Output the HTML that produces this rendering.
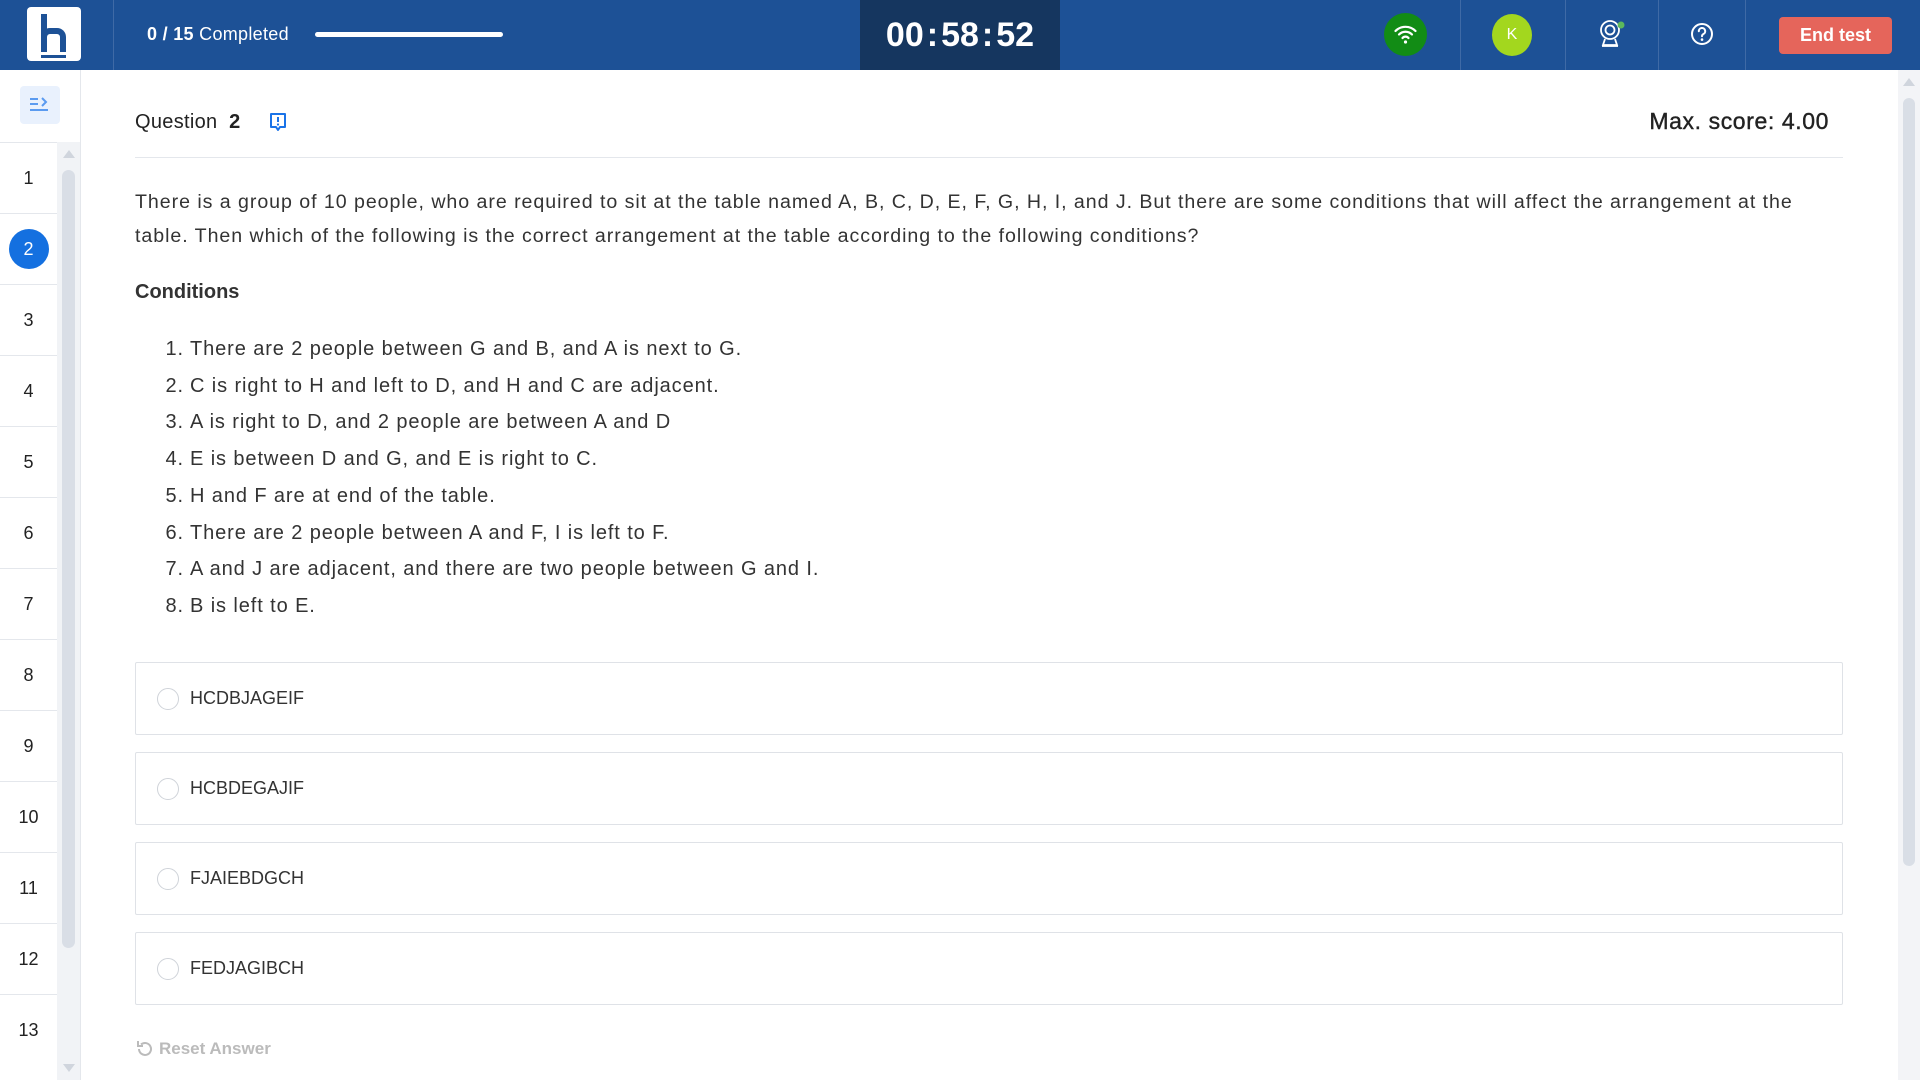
<!DOCTYPE html>
<html><head><style>
*{box-sizing:border-box;margin:0;padding:0}
body{width:1920px;height:1080px;overflow:hidden;background:#fff;font-family:"Liberation Sans",sans-serif;color:#333;position:relative}
.hdr{position:absolute;left:0;top:0;width:1920px;height:70px;background:#1d5196}
.abs{position:absolute}
.sep{position:absolute;top:0;width:1px;height:70px;background:#3f6aa6}
.row{position:absolute;left:0;width:57px;height:71px;border-top:1px solid #e4e7ec;display:flex;align-items:center;justify-content:center;font-size:18px;color:#222}
.opt{position:absolute;left:135px;width:1708px;height:73px;border:1px solid #dfe2e7;border-radius:2px}
.opt .r{position:absolute;left:21px;top:25px;width:22px;height:22px;border:1px solid #cfd3d9;border-radius:50%}
.opt .t{position:absolute;left:54px;top:25px;font-size:18px;color:#333}
.li{position:absolute;left:154px;font-size:20px;color:#333;letter-spacing:0.9px}
.li b{display:inline-block;width:30px;text-align:right;font-weight:normal;margin-right:6px}
</style></head><body>
<div class="hdr">
 <div class="abs" style="left:27px;top:7px;width:54px;height:54px;background:#fff;border-radius:4px"></div>
 <div class="abs" style="left:41px;top:14px;width:6px;height:38px;background:#1d5196"></div>
 <div class="abs" style="left:41px;top:28px;width:25px;height:24px;border:6px solid #1d5196;border-bottom:none;border-radius:9px 9px 0 0"></div>
 <div class="abs" style="left:41px;top:55px;width:25px;height:3px;background:#1d5196"></div>
 <div class="sep" style="left:113px"></div>
 <div class="abs" style="left:147px;top:24px;font-size:18px;color:#fff;letter-spacing:0.3px"><b>0 / 15</b> Completed</div>
 <div class="abs" style="left:315px;top:32px;width:188px;height:5px;background:#fff;border-radius:3px"></div>
 <div class="abs" style="left:860px;top:0;width:200px;height:70px;background:#15365f;color:#fff;font-size:34px;font-weight:bold;text-align:center;line-height:70px">00<span style="margin:0 3px">:</span>58<span style="margin:0 3px">:</span>52</div>
 <div class="abs" style="left:1384px;top:13px;width:43px;height:43px;border-radius:50%;background:#128c15"></div>
 <svg class="abs" style="left:1393px;top:23px" width="25" height="22" viewBox="0 0 24 22"><g fill="none" stroke="#fff" stroke-width="2.2" stroke-linecap="round"><path d="M2 8a14 14 0 0 1 20 0"/><path d="M5.5 11.5a9 9 0 0 1 13 0"/><path d="M9 15a4 4 0 0 1 6 0"/></g><circle cx="12" cy="19" r="1.6" fill="#fff"/></svg>
 <div class="sep" style="left:1460px"></div>
 <div class="abs" style="left:1492px;top:14px;width:40px;height:42px;border-radius:50%;background:#a3d71e;color:#fff;font-size:16px;text-align:center;line-height:42px">K</div>
 <div class="sep" style="left:1565px"></div>
 <svg class="abs" style="left:1598px;top:18px" width="28" height="32" viewBox="0 0 28 32"><g fill="none" stroke="#fff" stroke-width="1.8"><circle cx="12" cy="12" r="9"/><circle cx="12" cy="12" r="4.5"/><path d="M7 21l-2 6h14l-2-6"/><path d="M4 28h16"/></g><circle cx="23" cy="7" r="3.5" fill="#5cb85c"/></svg>
 <div class="sep" style="left:1658px"></div>
 <svg class="abs" style="left:1690px;top:22px" width="24" height="24" viewBox="0 0 24 24"><circle cx="12" cy="12" r="10" fill="none" stroke="#fff" stroke-width="2"/><path d="M8.8 9.2a3.2 3.2 0 1 1 4.5 2.9c-.9.5-1.3 1-1.3 2.2" fill="none" stroke="#fff" stroke-width="2" stroke-linecap="round"/><circle cx="12" cy="17.6" r="1.3" fill="#fff"/></svg>
 <div class="sep" style="left:1745px"></div>
 <div class="abs" style="left:1779px;top:17px;width:113px;height:37px;background:#e5655b;border-radius:4px;color:#fff;font-weight:bold;font-size:18px;text-align:center;line-height:37px">End test</div>
</div>
<div class="abs" style="left:0;top:70px;width:81px;height:1010px;border-right:1px solid #e4e7ec;background:#fff"></div>
<div class="abs" style="left:20px;top:86px;width:40px;height:38px;background:#e9f1fd;border-radius:4px"></div>
<svg class="abs" style="left:29px;top:95px" width="22" height="20" viewBox="0 0 22 20"><g stroke="#5b9bf0" stroke-width="2" fill="none"><path d="M1 4h8M1 9h8M1 15h18"/><path d="M13 3l4 4-4 4"/></g></svg>
<div class="abs" style="left:57px;top:142px;width:23px;height:938px;background:#f1f3f6"></div>
<div class="abs" style="left:62px;top:170px;width:13px;height:778px;background:#d9dee6;border-radius:7px"></div>
<div class="abs" style="left:63px;top:150px;width:0;height:0;border-left:6px solid transparent;border-right:6px solid transparent;border-bottom:8px solid #d0d5dd"></div>
<div class="abs" style="left:63px;top:1064px;width:0;height:0;border-left:6px solid transparent;border-right:6px solid transparent;border-top:8px solid #d0d5dd"></div>
<div class="row" style="top:142px">1</div>
<div class="row" style="top:213px"><span style="width:40px;height:40px;border-radius:50%;background:#1470e0;color:#fff;display:flex;align-items:center;justify-content:center">2</span></div>
<div class="row" style="top:284px">3</div>
<div class="row" style="top:355px">4</div>
<div class="row" style="top:426px">5</div>
<div class="row" style="top:497px">6</div>
<div class="row" style="top:568px">7</div>
<div class="row" style="top:639px">8</div>
<div class="row" style="top:710px">9</div>
<div class="row" style="top:781px">10</div>
<div class="row" style="top:852px">11</div>
<div class="row" style="top:923px">12</div>
<div class="row" style="top:994px">13</div>
<div class="abs" style="left:1898px;top:70px;width:22px;height:1010px;background:#f3f4f7"></div>
<div class="abs" style="left:1903px;top:98px;width:12px;height:768px;background:#d9dee6;border-radius:6px"></div>
<div class="abs" style="left:1903px;top:78px;border-left:6px solid transparent;border-right:6px solid transparent;border-bottom:8px solid #d0d5dd"></div>
<div class="abs" style="left:135px;top:111px;font-size:20px;color:#222;letter-spacing:0.3px">Question &nbsp;<b>2</b></div>
<svg class="abs" style="left:268px;top:112px" width="20" height="22" viewBox="0 0 20 22"><path d="M3 2h14v13h-5l-2 3-2-3H3z" fill="none" stroke="#1a73e8" stroke-width="2" stroke-linejoin="round"/><path d="M10 5v5" stroke="#1a73e8" stroke-width="2"/><circle cx="10" cy="12.5" r="1.1" fill="#1a73e8"/></svg>
<div class="abs" style="right:91px;top:108px;font-size:23px;color:#222;letter-spacing:0.6px;-webkit-text-stroke:0.4px #222">Max. score: 4.00</div>
<div class="abs" style="left:135px;top:157px;width:1708px;height:1px;background:#e4e7ec"></div>
<div class="abs" style="left:135px;top:185px;width:1675px;font-size:19.6px;line-height:34px;color:#333;letter-spacing:0.95px">There is a group of 10 people, who are required to sit at the table named A, B, C, D, E, F, G, H, I, and J. But there are some conditions that will affect the arrangement at the table. Then which of the following is the correct arrangement at the table according to the following conditions?</div>
<div class="abs" style="left:135px;top:281px;font-size:20px;font-weight:bold;color:#333">Conditions</div>
<div class="li" style="top:338px"><b>1.</b>There are 2 people between G and B, and A is next to G.</div>
<div class="li" style="top:375px"><b>2.</b>C is right to H and left to D, and H and C are adjacent.</div>
<div class="li" style="top:411px"><b>3.</b>A is right to D, and 2 people are between A and D</div>
<div class="li" style="top:448px"><b>4.</b>E is between D and G, and E is right to C.</div>
<div class="li" style="top:485px"><b>5.</b>H and F are at end of the table.</div>
<div class="li" style="top:522px"><b>6.</b>There are 2 people between A and F, I is left to F.</div>
<div class="li" style="top:558px"><b>7.</b>A and J are adjacent, and there are two people between G and I.</div>
<div class="li" style="top:595px"><b>8.</b>B is left to E.</div>
<div class="opt" style="top:662px"><div class="r"></div><div class="t">HCDBJAGEIF</div></div>
<div class="opt" style="top:752px"><div class="r"></div><div class="t">HCBDEGAJIF</div></div>
<div class="opt" style="top:842px"><div class="r"></div><div class="t">FJAIEBDGCH</div></div>
<div class="opt" style="top:932px"><div class="r"></div><div class="t">FEDJAGIBCH</div></div>
<svg class="abs" style="left:135px;top:1039px" width="20" height="20" viewBox="0 0 20 20"><path d="M4 10a6 6 0 1 0 2-4.5" fill="none" stroke="#bbb" stroke-width="2"/><path d="M3 2v5h5" fill="none" stroke="#bbb" stroke-width="2"/></svg>
<div class="abs" style="left:159px;top:1039px;font-size:17px;font-weight:bold;color:#bbb">Reset Answer</div>
</body></html>
